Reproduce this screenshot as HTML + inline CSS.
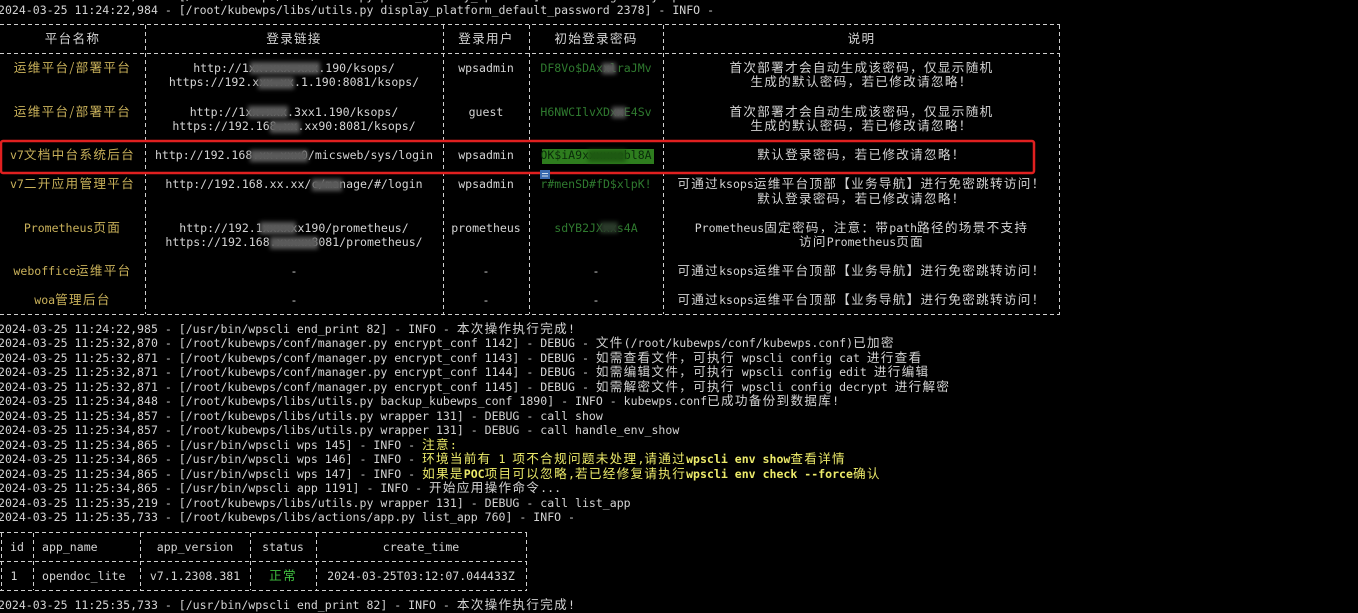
<!DOCTYPE html>
<html><head><meta charset="utf-8"><style>
body{margin:0;background:#000;width:1358px;height:604px;overflow:hidden;position:relative;font-family:"DejaVu Sans Mono","Noto Sans CJK SC",monospace;font-size:11.55px;color:#d4d4d4}
.l{position:absolute;left:-2px;white-space:pre;line-height:14.5px;height:14.5px}
.c{position:absolute;text-align:center;white-space:pre;line-height:14.5px;height:14.5px}
.k{font-family:"Noto Sans CJK SC",sans-serif;font-size:12.6px;letter-spacing:1.3px;line-height:0}
.y{color:#c9b15a}
.g{color:#2f7a2f}
.yy{color:#ecea6a}
.bl{position:absolute;background:#5a5a5a;filter:blur(2px)}
svg{position:absolute;left:0;top:0}
</style></head><body>
<svg width="1358" height="604">
<g stroke="#cfcfcf" stroke-width="1" stroke-dasharray="4 3">
<line x1="0" y1="24.5" x2="1060" y2="24.5"/>
<line x1="0" y1="53.5" x2="1060" y2="53.5"/>
<line x1="0" y1="314.5" x2="1060" y2="314.5"/>
<line x1="145.5" y1="25" x2="145.5" y2="314"/>
<line x1="443.5" y1="25" x2="443.5" y2="314"/>
<line x1="529.5" y1="25" x2="529.5" y2="314"/>
<line x1="663.5" y1="25" x2="663.5" y2="314"/>
<line x1="1059.5" y1="25" x2="1059.5" y2="314"/>
<line x1="0" y1="532.5" x2="527" y2="532.5"/>
<line x1="0" y1="561.5" x2="527" y2="561.5"/>
<line x1="0" y1="590.5" x2="527" y2="590.5"/>
<line x1="1.5" y1="533" x2="1.5" y2="590"/>
<line x1="33.5" y1="533" x2="33.5" y2="590"/>
<line x1="140.5" y1="533" x2="140.5" y2="590"/>
<line x1="250.5" y1="533" x2="250.5" y2="590"/>
<line x1="316.5" y1="533" x2="316.5" y2="590"/>
<line x1="526.5" y1="533" x2="526.5" y2="590"/>
</g>
<rect x="1" y="141" width="1033" height="32" fill="none" stroke="#e02020" stroke-width="2.5" rx="2"/>
<rect x="540" y="170" width="10" height="9" fill="#3a6ab0"/>
<line x1="542" y1="173.5" x2="548" y2="173.5" stroke="#cde" stroke-width="1"/>
<line x1="542" y1="176" x2="548" y2="176" stroke="#cde" stroke-width="1"/>
</svg>

<div class="l" style="top:-10.75px">2024-03-25 11:24:22,984 - [/root/kubewps/libs/utils.py print_gateway_api 2366] - INFO - gateway api success</div>
<div class="l" style="top:2.75px">2024-03-25 11:24:22,984 - [/root/kubewps/libs/utils.py display_platform_default_password 2378] - INFO -</div>

<div class="c" style="top:31.75px;left:0;width:145px"><span class="k">平台名称</span></div>
<div class="c" style="top:31.75px;left:145px;width:298px"><span class="k">登录链接</span></div>
<div class="c" style="top:31.75px;left:443px;width:86px"><span class="k">登录用户</span></div>
<div class="c" style="top:31.75px;left:529px;width:134px"><span class="k">初始登录密码</span></div>
<div class="c" style="top:31.75px;left:663px;width:397px"><span class="k">说明</span></div>

<div class="c y" style="top:60.75px;left:0;width:145px"><span class="k">运维平台/部署平台</span></div>
<div class="c" style="top:60.75px;left:145px;width:298px">http://1xx.xxx.xxx.190/ksops/</div>
<div class="c" style="top:75.25px;left:145px;width:298px">https://192.xxx.xx.1.190:8081/ksops/</div>
<div class="c" style="top:60.75px;left:443px;width:86px">wpsadmin</div>
<div class="c g" style="top:60.75px;left:529px;width:134px">DF8Vo$DAxxlraJMv</div>
<div class="c" style="top:60.75px;left:663px;width:397px"><span class="k">首次部署才会自动生成该密码，仅显示随机</span></div>
<div class="c" style="top:75.25px;left:663px;width:397px"><span class="k">生成的默认密码，若已修改请忽略！</span></div>
<div class="bl" style="left:250px;top:62px;width:70px;height:12px"></div>
<div class="bl" style="left:258px;top:77px;width:36px;height:12px"></div>
<div class="bl" style="left:602px;top:63px;width:14px;height:11px"></div>

<div class="c y" style="top:104.75px;left:0;width:145px"><span class="k">运维平台/部署平台</span></div>
<div class="c" style="top:104.75px;left:145px;width:298px">http://1xx.xxx.3xx1.190/ksops/</div>
<div class="c" style="top:119.25px;left:145px;width:298px">https://192.168.xx.xx90:8081/ksops/</div>
<div class="c" style="top:104.75px;left:443px;width:86px">guest</div>
<div class="c g" style="top:104.75px;left:529px;width:134px">H6NWCIlvXDxxE4Sv</div>
<div class="c" style="top:104.75px;left:663px;width:397px"><span class="k">首次部署才会自动生成该密码，仅显示随机</span></div>
<div class="c" style="top:119.25px;left:663px;width:397px"><span class="k">生成的默认密码，若已修改请忽略！</span></div>
<div class="bl" style="left:248px;top:106px;width:40px;height:12px"></div>
<div class="bl" style="left:270px;top:121px;width:30px;height:12px"></div>
<div class="bl" style="left:612px;top:107px;width:14px;height:11px"></div>

<div style="position:absolute;left:542px;top:149px;width:112px;height:15px;background:#2e7d1e"></div>
<div class="c y" style="top:148.25px;left:0;width:145px">v7<span class="k">文档中台系统后台</span></div>
<div class="c" style="top:148.25px;left:145px;width:298px">http://192.168.xx.xxx0/micsweb/sys/login</div>
<div class="c" style="top:148.25px;left:443px;width:86px">wpsadmin</div>
<div class="c" style="top:148.25px;left:529px;width:134px;color:#0a2a0a">OK$iA9xxxxxebl8A</div>
<div class="c" style="top:148.25px;left:663px;width:397px"><span class="k">默认登录密码，若已修改请忽略！</span></div>
<div class="bl" style="left:250px;top:150px;width:58px;height:12px"></div>
<div class="bl" style="left:588px;top:150px;width:38px;height:12px;background:#1e5a12"></div>

<div class="c y" style="top:177.25px;left:0;width:145px">v7<span class="k">二开应用管理平台</span></div>
<div class="c" style="top:177.25px;left:145px;width:298px">http://192.168.xx.xx/c/manage/#/login</div>
<div class="c" style="top:177.25px;left:443px;width:86px">wpsadmin</div>
<div class="c g" style="top:177.25px;left:529px;width:134px">r#menSD#fD$xlpK!</div>
<div class="c" style="top:177.25px;left:663px;width:397px"><span class="k">可通过</span>ksops<span class="k">运维平台顶部【业务导航】进行免密跳转访问！</span></div>
<div class="c" style="top:191.75px;left:663px;width:397px"><span class="k">默认登录密码，若已修改请忽略！</span></div>
<div class="bl" style="left:312px;top:179px;width:30px;height:12px"></div>

<div class="c y" style="top:220.75px;left:0;width:145px">Prometheus<span class="k">页面</span></div>
<div class="c" style="top:220.75px;left:145px;width:298px">http://192.1xxxxxx190/prometheus/</div>
<div class="c" style="top:235.25px;left:145px;width:298px">https://192.168.xxxxx8081/prometheus/</div>
<div class="c" style="top:220.75px;left:443px;width:86px">prometheus</div>
<div class="c g" style="top:220.75px;left:529px;width:134px">sdYB2JXxxs4A</div>
<div class="c" style="top:220.75px;left:663px;width:397px">Prometheus<span class="k">固定密码，注意：带</span>path<span class="k">路径的场景不支持</span></div>
<div class="c" style="top:235.25px;left:663px;width:397px"><span class="k">访问</span>Prometheus<span class="k">页面</span></div>
<div class="bl" style="left:260px;top:222px;width:36px;height:12px"></div>
<div class="bl" style="left:270px;top:237px;width:48px;height:12px"></div>
<div class="bl" style="left:600px;top:222px;width:18px;height:11px;background:#2a3a2a"></div>

<div class="c y" style="top:264.25px;left:0;width:145px">weboffice<span class="k">运维平台</span></div>
<div class="c" style="top:264.25px;left:145px;width:298px">-</div>
<div class="c" style="top:264.25px;left:443px;width:86px">-</div>
<div class="c" style="top:264.25px;left:529px;width:134px">-</div>
<div class="c" style="top:264.25px;left:663px;width:397px"><span class="k">可通过</span>ksops<span class="k">运维平台顶部【业务导航】进行免密跳转访问！</span></div>
<div class="c y" style="top:293.25px;left:0;width:145px">woa<span class="k">管理后台</span></div>
<div class="c" style="top:293.25px;left:145px;width:298px">-</div>
<div class="c" style="top:293.25px;left:443px;width:86px">-</div>
<div class="c" style="top:293.25px;left:529px;width:134px">-</div>
<div class="c" style="top:293.25px;left:663px;width:397px"><span class="k">可通过</span>ksops<span class="k">运维平台顶部【业务导航】进行免密跳转访问！</span></div>

<div class="l" style="top:321.75px">2024-03-25 11:24:22,985 - [/usr/bin/wpscli end_print 82] - INFO - <span class="k">本次操作执行完成</span>!</div>
<div class="l" style="top:336.25px">2024-03-25 11:25:32,870 - [/root/kubewps/conf/manager.py encrypt_conf 1142] - DEBUG - <span class="k">文件</span>(/root/kubewps/conf/kubewps.conf)<span class="k">已加密</span></div>
<div class="l" style="top:350.75px">2024-03-25 11:25:32,871 - [/root/kubewps/conf/manager.py encrypt_conf 1143] - DEBUG - <span class="k">如需查看文件，可执行</span> wpscli config cat <span class="k">进行查看</span></div>
<div class="l" style="top:365.25px">2024-03-25 11:25:32,871 - [/root/kubewps/conf/manager.py encrypt_conf 1144] - DEBUG - <span class="k">如需编辑文件，可执行</span> wpscli config edit <span class="k">进行编辑</span></div>
<div class="l" style="top:379.75px">2024-03-25 11:25:32,871 - [/root/kubewps/conf/manager.py encrypt_conf 1145] - DEBUG - <span class="k">如需解密文件，可执行</span> wpscli config decrypt <span class="k">进行解密</span></div>
<div class="l" style="top:394.25px">2024-03-25 11:25:34,848 - [/root/kubewps/libs/utils.py backup_kubewps_conf 1890] - INFO - kubewps.conf<span class="k">已成功备份到数据库</span>!</div>
<div class="l" style="top:408.75px">2024-03-25 11:25:34,857 - [/root/kubewps/libs/utils.py wrapper 131] - DEBUG - call show</div>
<div class="l" style="top:423.25px">2024-03-25 11:25:34,857 - [/root/kubewps/libs/utils.py wrapper 131] - DEBUG - call handle_env_show</div>
<div class="l" style="top:437.75px">2024-03-25 11:25:34,865 - [/usr/bin/wpscli wps 145] - INFO - <span class="yy"><span class="k">注意</span>:</span></div>
<div class="l" style="top:452.25px">2024-03-25 11:25:34,865 - [/usr/bin/wpscli wps 146] - INFO - <span class="yy"><span class="k">环境当前有</span> 1 <span class="k">项不合规问题未处理</span>,<span class="k">请通过</span><b>wpscli env show</b><span class="k">查看详情</span></span></div>
<div class="l" style="top:466.75px">2024-03-25 11:25:34,865 - [/usr/bin/wpscli wps 147] - INFO - <span class="yy"><span class="k">如果是</span><b>POC</b><span class="k">项目可以忽略</span>,<span class="k">若已经修复请执行</span><b>wpscli env check --force</b><span class="k">确认</span></span></div>
<div class="l" style="top:481.25px">2024-03-25 11:25:34,865 - [/usr/bin/wpscli app 1191] - INFO - <span class="k">开始应用操作命令</span>...</div>
<div class="l" style="top:495.75px">2024-03-25 11:25:35,219 - [/root/kubewps/libs/utils.py wrapper 131] - DEBUG - call list_app</div>
<div class="l" style="top:510.25px">2024-03-25 11:25:35,733 - [/root/kubewps/libs/actions/app.py list_app 760] - INFO -</div>

<div class="c" style="top:539.75px;left:1px;width:32px">id</div>
<div class="l" style="top:539.75px;left:42px">app_name</div>
<div class="c" style="top:539.75px;left:140px;width:110px">app_version</div>
<div class="c" style="top:539.75px;left:250px;width:66px">status</div>
<div class="c" style="top:539.75px;left:316px;width:210px">create_time</div>
<div class="c" style="top:568.75px;left:1px;width:26px">1</div>
<div class="l" style="top:568.75px;left:42px">opendoc_lite</div>
<div class="c" style="top:568.75px;left:140px;width:110px">v7.1.2308.381</div>
<div class="c" style="top:568.75px;left:250px;width:66px;color:#3fbf3f"><span class="k">正常</span></div>
<div class="c" style="top:568.75px;left:316px;width:210px">2024-03-25T03:12:07.044433Z</div>
<div class="l" style="top:597.75px">2024-03-25 11:25:35,733 - [/usr/bin/wpscli end_print 82] - INFO - <span class="k">本次操作执行完成</span>!</div>
</body></html>
